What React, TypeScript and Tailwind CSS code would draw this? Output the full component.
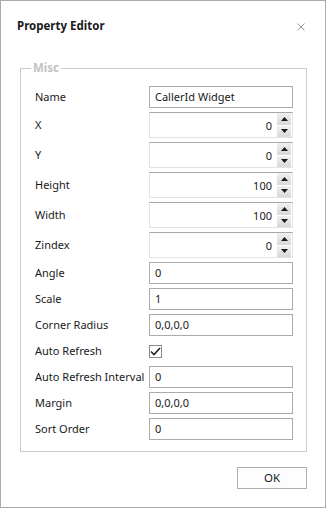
import React from "react";

type Row = { label: string; kind: "text" | "spin" | "check"; value?: string };

const rows: Row[] = [
  { label: "Name", kind: "text", value: "CallerId Widget" },
  { label: "X", kind: "spin", value: "0" },
  { label: "Y", kind: "spin", value: "0" },
  { label: "Height", kind: "spin", value: "100" },
  { label: "Width", kind: "spin", value: "100" },
  { label: "Zindex", kind: "spin", value: "0" },
  { label: "Angle", kind: "text", value: "0" },
  { label: "Scale", kind: "text", value: "1" },
  { label: "Corner Radius", kind: "text", value: "0,0,0,0" },
  { label: "Auto Refresh", kind: "check" },
  { label: "Auto Refresh Interval", kind: "text", value: "0" },
  { label: "Margin", kind: "text", value: "0,0,0,0" },
  { label: "Sort Order", kind: "text", value: "0" },
];

function Arrow({ up }: { up: boolean }) {
  return (
    <svg width="7" height="4" viewBox="0 0 7 4">
      {up ? <polygon points="0,4 7,4 3.5,0" fill="#1a1a1a" /> : <polygon points="0,0 7,0 3.5,4" fill="#1a1a1a" />}
    </svg>
  );
}

function Spin({ value }: { value: string }) {
  return (
    <div className="flex h-[26px] w-[144px] items-center border border-[#e3e3e3] border-t-[#a8a8a8] bg-white">
      <span className="flex-1 pr-[5px] pt-[2px] text-right">{value}</span>
      <div className="mr-[1px] flex h-[24px] w-[14px] flex-col gap-[1px]">
        <div className="flex flex-1 items-center justify-center bg-gradient-to-b from-[#f0f0f0] to-[#d8d8d8]">
          <Arrow up />
        </div>
        <div className="flex flex-1 items-center justify-center bg-gradient-to-b from-[#f0f0f0] to-[#d8d8d8]">
          <Arrow up={false} />
        </div>
      </div>
    </div>
  );
}

function TextBox({ value }: { value: string }) {
  return (
    <div className="flex h-[22px] w-[144px] items-center border border-[#ababab] bg-white pl-[5px]">
      {value}
    </div>
  );
}

function Check() {
  return (
    <div className="flex h-[22px] items-center">
      <div className="flex h-[13px] w-[13px] items-center justify-center border border-[#8a8a8a] bg-white">
        <svg width="11" height="9" viewBox="0 0 11 9">
          <polyline points="1,4.5 4,7.5 10,1" fill="none" stroke="#222" strokeWidth="1.6" />
        </svg>
      </div>
    </div>
  );
}

export default function App() {
  return (
    <div className="flex h-[508px] w-[326px] flex-col border border-[#ababab] bg-white font-['Noto_Sans',sans-serif] text-[11px] leading-[16px] text-[#1a1a1a]">
      <div className="flex h-[48px] items-center justify-between pl-[16px] pr-[20px]">
        <span className="pt-[1px] text-[11.5px] font-bold text-[#1a1a1a]">Property Editor</span>
        <svg width="8" height="8" viewBox="0 0 8 8" className="mt-[4px]">
          <line x1="0.5" y1="0.5" x2="7.5" y2="7.5" stroke="#9a9a9a" strokeWidth="1" />
          <line x1="7.5" y1="0.5" x2="0.5" y2="7.5" stroke="#9a9a9a" strokeWidth="1" />
        </svg>
      </div>
      <fieldset className="ml-[19px] mt-[11px] w-[287px] border border-[#cccccc] pb-[11px] pl-[14px] pt-[10px]">
        <legend className="ml-[-4px] px-[2px] text-[11.5px] font-bold text-[#c2c2c2]">Misc</legend>
        <div className="flex flex-col gap-[4px]">
          {rows.map((r) => (
            <div key={r.label} className="flex items-center">
              <span className="w-[114px] whitespace-nowrap">{r.label}</span>
              {r.kind === "text" && <TextBox value={r.value!} />}
              {r.kind === "spin" && <Spin value={r.value!} />}
              {r.kind === "check" && <Check />}
            </div>
          ))}
        </div>
      </fieldset>
      <div className="mt-[15px] flex w-[306px] justify-end">
        <button className="flex h-[22px] w-[70px] items-center justify-center border border-[#adadad] bg-[#fdfdfd] text-[11.5px] text-[#1a1a1a]">
          OK
        </button>
      </div>
    </div>
  );
}
